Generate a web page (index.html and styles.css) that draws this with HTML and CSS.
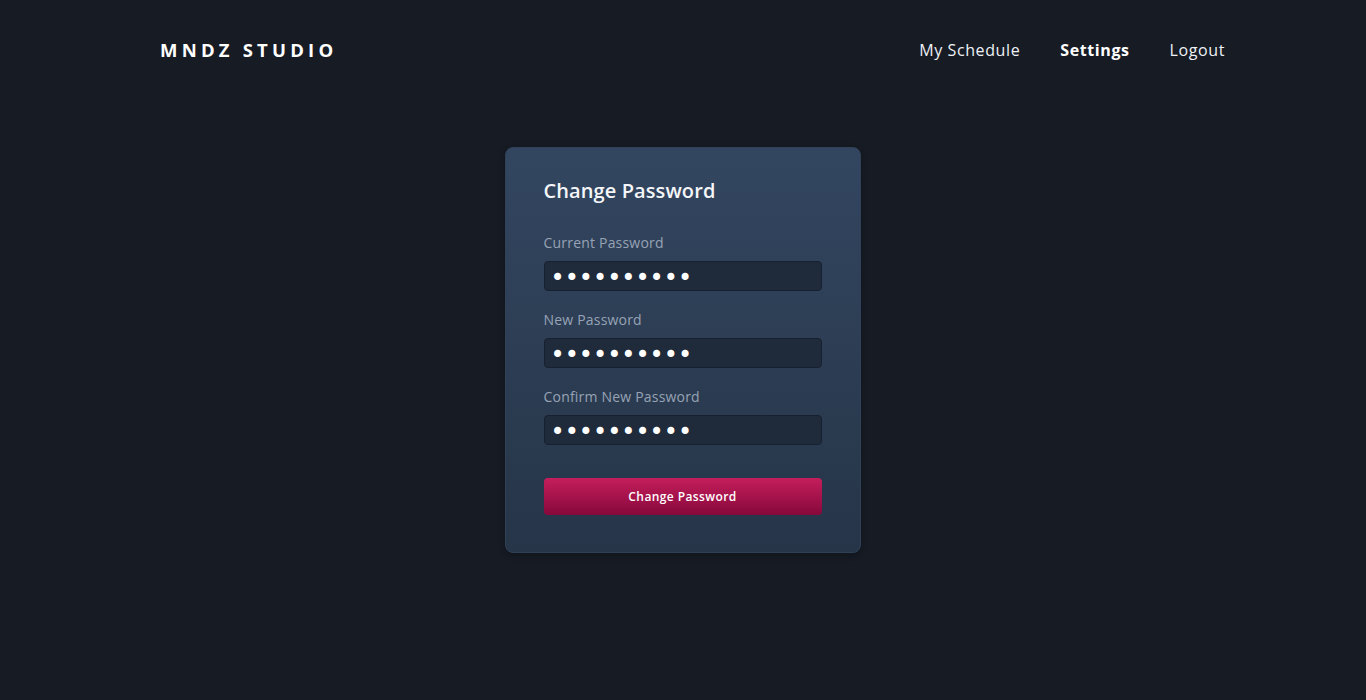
FILE: index.html
```html
<!DOCTYPE html>
<html lang="en">
<head>
<meta charset="utf-8">
<title>Change Password - MNDZ Studio</title>
<link rel="stylesheet" href="styles.css">
</head>
<body>
<header class="topbar">
  <div class="logo">MNDZ STUDIO</div>
  <nav class="nav">
    <a class="nav-link" href="#">My Schedule</a>
    <a class="nav-link active" href="#">Settings</a>
    <a class="nav-link" href="#">Logout</a>
  </nav>
</header>
<main class="main">
  <form class="card">
    <h1 class="card-title">Change Password</h1>
    <label class="field">
      <span class="field-label">Current Password</span>
      <input class="field-input" type="password" value="1234567890">
    </label>
    <label class="field">
      <span class="field-label">New Password</span>
      <input class="field-input" type="password" value="1234567890">
    </label>
    <label class="field">
      <span class="field-label">Confirm New Password</span>
      <input class="field-input" type="password" value="1234567890">
    </label>
    <button class="btn" type="button">Change Password</button>
  </form>
</main>
</body>
</html>
```
FILE: styles.css
```css
* { box-sizing: border-box; }
html, body { margin: 0; padding: 0; }
body {
  background: #161b24;
  color: #ffffff;
  font-family: "Open Sans", "Noto Sans", sans-serif;
  min-height: 700px;
}
.topbar {
  display: flex;
  justify-content: space-between;
  align-items: center;
  padding: 20px 141px 0 160px;
  height: 80px;
}
.logo {
  font-size: 18.5px;
  font-weight: 700;
  letter-spacing: 4.2px;
  line-height: 28px;
}
.nav {
  display: flex;
  gap: 40px;
}
.nav-link {
  color: #eef1f5;
  text-decoration: none;
  font-size: 16px;
  letter-spacing: 0.6px;
  line-height: 28px;
}
.nav-link.active {
  font-weight: 700;
  color: #ffffff;
}
.main {
  display: flex;
  justify-content: center;
  padding-top: 67px;
  padding-right: 1px;
}
.card {
  width: 356px;
  height: 406px;
  border-radius: 8px;
  background: linear-gradient(180deg, #334660 0%, #263548 100%);
  border: 1px solid #2f4057;
  padding: 28px 38px 0 38px;
  display: flex;
  flex-direction: column;
  box-shadow: 0 2px 6px rgba(0,0,0,0.25);
}
.card-title {
  margin: 0 0 27px 0;
  font-size: 20px;
  font-weight: 600;
  letter-spacing: 0.1px;
  line-height: 30px;
  color: #f4f6f9;
}
.field {
  display: flex;
  flex-direction: column;
  margin-bottom: 19px;
}
.field-label {
  font-size: 14px;
  color: #97a3b5;
  letter-spacing: 0.2px;
  line-height: 20px;
  margin-bottom: 8px;
}
.field-input {
  height: 30px;
  width: 278px;
  background: #1f2a3a;
  border: 1px solid #172030;
  border-radius: 4px;
  color: #ffffff;
  font-size: 24px;
  letter-spacing: 0;
  padding: 3px 6px 0 6px;
  font-family: "DejaVu Sans", sans-serif;
  outline: none;
}
.btn {
  margin-top: 14px;
  width: 278px;
  height: 37px;
  border: none;
  border-radius: 4px;
  background: linear-gradient(180deg, #c41e5b 0%, #a3124a 55%, #86083a 100%);
  color: #ffffff;
  font-family: "Open Sans", "Noto Sans", sans-serif;
  font-size: 12px;
  font-weight: 600;
  letter-spacing: 0.4px;
  cursor: pointer;
}
```
